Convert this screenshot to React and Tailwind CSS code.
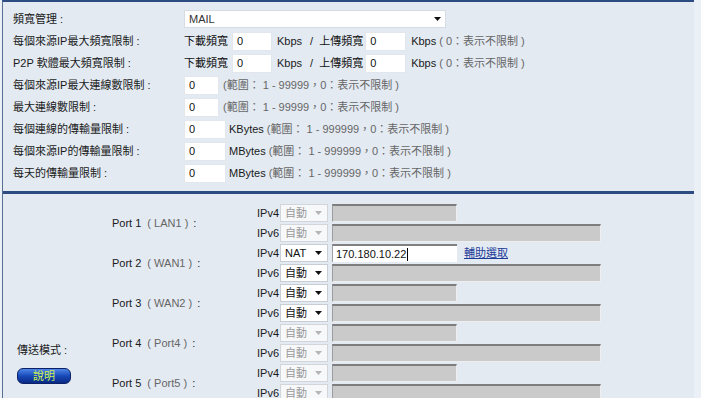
import React from 'react';

// dropdown triangle used by the select boxes
const Arrow = ({ color = '#111' }) => (
  <svg width="7" height="4" viewBox="0 0 7 4" className="shrink-0">
    <polygon points="0,0 7,0 3.5,4" fill={color} />
  </svg>
);

const TextBox = ({ w, value = '0' }) => (
  <div className={`flex h-[19px] items-center border border-[#e2e7ed] bg-white pl-[4px] text-[#111] ${w}`}>
    {value}
  </div>
);

const limitRows = [
  { label: '每個來源IP最大連線數限制', w: 'w-[35px]', unit: '', range: '(範圍： 1 - 99999，0：表示不限制 )' },
  { label: '最大連線數限制', w: 'w-[35px]', unit: '', range: '(範圍： 1 - 99999，0：表示不限制 )' },
  { label: '每個連線的傳輸量限制', w: 'w-[42px]', unit: 'KBytes', range: '(範圍： 1 - 999999，0：表示不限制 )' },
  { label: '每個來源IP的傳輸量限制', w: 'w-[42px]', unit: 'MBytes', range: '(範圍： 1 - 999999，0：表示不限制 )' },
  { label: '每天的傳輸量限制', w: 'w-[42px]', unit: 'MBytes', range: '(範圍： 1 - 999999，0：表示不限制 )' },
];

const ports = [
  { name: 'Port 1', tag: 'LAN1', v4: { value: '自動', on: false }, v6: { value: '自動', on: false } },
  { name: 'Port 2', tag: 'WAN1', v4: { value: 'NAT', on: true, ip: '170.180.10.22' }, v6: { value: '自動', on: true } },
  { name: 'Port 3', tag: 'WAN2', v4: { value: '自動', on: true }, v6: { value: '自動', on: true } },
  { name: 'Port 4', tag: 'Port4', v4: { value: '自動', on: false }, v6: { value: '自動', on: false } },
  { name: 'Port 5', tag: 'Port5', v4: { value: '自動', on: false }, v6: { value: '自動', on: false } },
];

const Label = ({ children }) => (
  <div className="w-[181px] shrink-0 pl-[10px] text-[#1a1a1a]">{children} :</div>
);

function BandwidthRow({ label }) {
  return (
    <div className="flex h-[22px] items-center">
      <Label>{label}</Label>
      <span className="text-[#111]">下載頻寬</span>
      <div className="ml-[4px]"><TextBox w="w-[40px]" /></div>
      <span className="ml-[5px] text-[#1a1a1a]">Kbps</span>
      <span className="ml-[8px] text-[#1a1a1a]">/</span>
      <span className="ml-[6px] text-[#111]">上傳頻寬</span>
      <div className="ml-[2px]"><TextBox w="w-[41px]" /></div>
      <span className="ml-[5px] text-[#1a1a1a]">Kbps</span>
      <span className="ml-[3px] text-[#666]">( 0：表示不限制 )</span>
    </div>
  );
}

function PortSelect({ value, on }) {
  return (
    <div
      className={
        on
          ? 'flex h-[18px] w-[48px] items-center justify-between border border-[#c9ced4] bg-white pl-[4px] pr-[5px] text-[#111]'
          : 'flex h-[18px] w-[48px] items-center justify-between border border-[#d2d6db] bg-[#f6f8fa] pl-[4px] pr-[5px] text-[#999]'
      }
    >
      <span>{value}</span>
      <Arrow color={on ? '#111' : '#b5b5b5'} />
    </div>
  );
}

function IpRow({ kind, sel, long }) {
  return (
    <div className="flex h-[20px] items-center">
      <span className="w-[23px] shrink-0 text-[#1a1a1a]">{kind}</span>
      <PortSelect value={sel.value} on={sel.on} />
      {sel.ip ? (
        <>
          <div className="ml-[4px] flex h-[18px] w-[125px] items-center border-t-2 border-l border-t-[#808080] border-l-[#a0a0a0] bg-white pl-[3px] text-[#111]">
            {sel.ip}
            <span className="ml-px h-[13px] w-px bg-black" />
          </div>
          <a href="#" className="ml-[7px] text-[#1b3a97] underline">輔助選取</a>
        </>
      ) : (
        <div
          className={
            long
              ? 'ml-[4px] h-[18px] w-[269px] border-t-2 border-l border-r border-b border-t-[#7d7d7d] border-l-[#9c9c9c] border-r-[#eeeeee] border-b-[#eeeeee] bg-[#cacaca]'
              : 'ml-[4px] h-[18px] w-[125px] border-t-2 border-l border-r border-b border-t-[#7d7d7d] border-l-[#9c9c9c] border-r-[#eeeeee] border-b-[#eeeeee] bg-[#cacaca]'
          }
        />
      )}
    </div>
  );
}

export default function App() {
  return (
    <div className="h-[398px] w-[701px] overflow-hidden bg-[#eaf0f6] font-['Liberation_Sans','Noto_Sans_CJK_TC',sans-serif] text-[11px] leading-[14px]">
      <div className="ml-[2px] w-[692px] border-t-2 border-l border-t-[#2d4c82] border-l-[#5a6f91] bg-[#e3eaf2]">
        {/* limits */}
        <div className="pt-[6px]">
          <div className="flex h-[22px] items-center">
            <Label>頻寬管理</Label>
            <div className="flex h-[18px] w-[262px] items-center justify-between border border-[#d6dce3] bg-white pl-[4px] pr-[4px] text-[#333]">
              <span>MAIL</span>
              <Arrow />
            </div>
          </div>
          <BandwidthRow label="每個來源IP最大頻寬限制" />
          <BandwidthRow label="P2P 軟體最大頻寬限制" />
          {limitRows.map((r) => (
            <div key={r.label} className="flex h-[22px] items-center">
              <Label>{r.label}</Label>
              <TextBox w={r.w} />
              {r.unit && <span className="ml-[3px] text-[#1a1a1a]">{r.unit}</span>}
              <span className={r.unit ? 'ml-[3px] text-[#666]' : 'ml-[4px] text-[#666]'}>{r.range}</span>
            </div>
          ))}
        </div>

        <div className="mt-[7px] h-[3px] bg-[#2d4c82]" />

        {/* port modes */}
        <div className="flex pt-[9px]">
          <div className="w-[109px] shrink-0 pl-[14px] pt-[140px]">
            <div className="text-[#1a1a1a]">傳送模式 :</div>
            <button className="mt-[11px] flex h-[16px] w-[54px] items-center justify-center rounded-[6px] border border-[#0b2067] bg-linear-to-b from-[#4f86e8] via-[#1849b8] to-[#0a2a86] text-[11px] leading-[14px] text-[#cdf24f]">
              說明
            </button>
          </div>
          <div>
            {ports.map((p) => (
              <div key={p.name} className="flex h-[40px]">
                <div className="flex w-[145px] shrink-0 items-center text-[#1a1a1a]">
                  {p.name}
                  <span className="ml-[6px] text-[#666]">( {p.tag} )</span>
                  <span className="ml-[5px]">:</span>
                </div>
                <div className="flex flex-col">
                  <IpRow kind="IPv4" sel={p.v4} />
                  <IpRow kind="IPv6" sel={p.v6} long />
                </div>
              </div>
            ))}
          </div>
        </div>
      </div>
    </div>
  );
}
